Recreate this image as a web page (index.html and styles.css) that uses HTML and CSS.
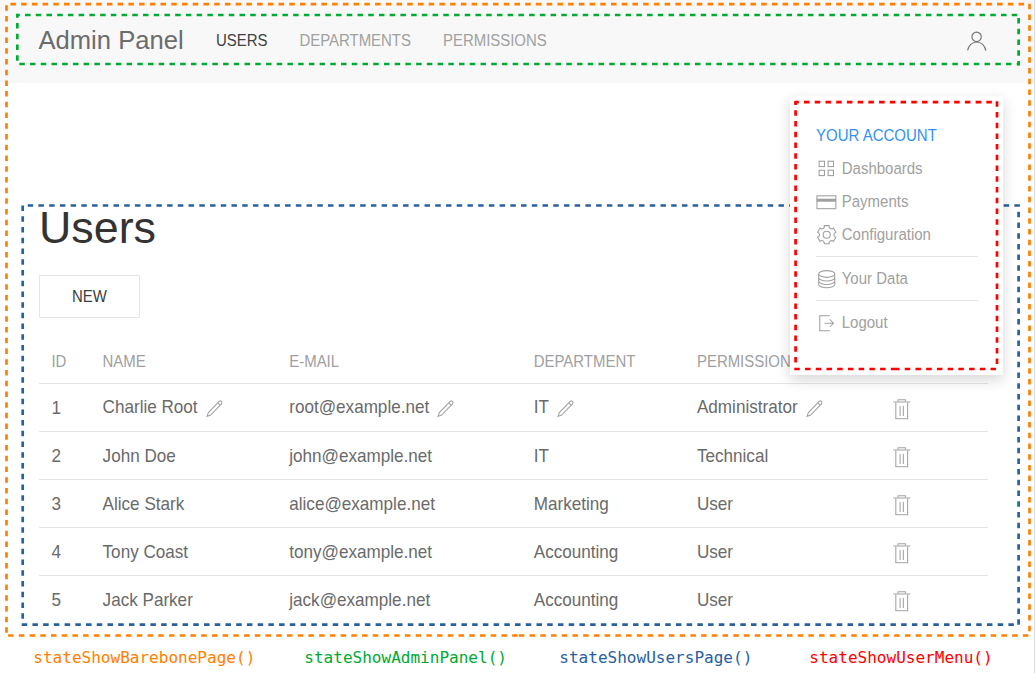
FILE: index.html
```html
<!DOCTYPE html>
<html lang="en">
<head>
<meta charset="utf-8">
<title>Admin Panel</title>
<link rel="stylesheet" href="styles.css">
</head>
<body>
<svg class="symbols" aria-hidden="true">
  <symbol id="user" viewBox="0 0 20 20"><g fill="none" stroke="currentColor" stroke-width="1.1"><circle cx="9.9" cy="6.4" r="4.4"/><path d="M1.5,19 C2.3,14.5 5.8,11.2 10,11.2 C14.2,11.2 17.7,14.6 18.5,19.2"/></g></symbol>
  <symbol id="grid" viewBox="0 0 20 20"><g fill="none" stroke="currentColor"><rect x="2.9" y="3" width="5" height="5"/><rect x="11.3" y="3" width="5" height="5"/><rect x="2.9" y="11.4" width="5" height="5"/><rect x="11.3" y="11.4" width="5" height="5"/></g></symbol>
  <symbol id="card" viewBox="0 0 20 20"><rect x=".9" y="4.5" width="17.6" height="12" fill="none" stroke="currentColor"/><rect x=".6" y="7.2" width="18.2" height="2.8" fill="currentColor"/></symbol>
  <symbol id="cog" viewBox="0 0 20 20"><g fill="none" stroke="currentColor"><circle cx="9.997" cy="10" r="3.31"/><path d="M18.488,12.285 L16.205,16.237 C15.322,15.496 14.185,15.281 13.303,15.791 C12.428,16.289 12.047,17.373 12.246,18.5 L7.735,18.5 C7.938,17.374 7.553,16.299 6.684,15.791 C5.801,15.27 4.655,15.492 3.773,16.237 L1.5,12.285 C2.573,11.871 3.317,10.999 3.317,9.991 C3.305,8.98 2.573,8.121 1.5,7.716 L3.765,3.784 C4.645,4.516 5.794,4.738 6.687,4.232 C7.555,3.722 7.939,2.637 7.735,1.5 L12.263,1.5 C12.072,2.637 12.441,3.71 13.314,4.22 C14.206,4.73 15.343,4.516 16.225,3.794 L18.487,7.714 C17.404,8.117 16.661,8.988 16.67,10.009 C16.672,11.018 17.415,11.88 18.488,12.285Z"/></g></symbol>
  <symbol id="database" viewBox="0 0 20 20"><g fill="none" stroke="currentColor"><ellipse cx="10" cy="4.64" rx="7.5" ry="3.14"/><path d="M17.5,8.11C17.5,9.85 14.14,11.25 10,11.25C5.86,11.25 2.5,9.84 2.5,8.11M17.5,11.25C17.5,12.99 14.14,14.39 10,14.39C5.86,14.39 2.5,12.98 2.5,11.25M17.49,4.64L17.5,14.36C17.5,16.1 14.14,17.5 10,17.5C5.86,17.5 2.5,16.09 2.5,14.36L2.5,4.64"/></g></symbol>
  <symbol id="signout" viewBox="0 0 20 20"><g fill="currentColor"><path d="M13.1 13.4 12.5 12.8 15.28 10 8 10 8 9 15.28 9 12.5 6.2 13.1 5.62 17 9.5Z"/><path d="M13 2 3 2 3 17 13 17 13 16 4 16 4 3 13 3Z"/></g></symbol>
  <symbol id="pencil" viewBox="0 0 20 20"><path fill="none" stroke="currentColor" d="M17.25,6.01L7.12,16.1L3.82,17.2L5.02,13.9L15.12,3.88C15.71,3.29 16.66,3.29 17.25,3.88C17.83,4.47 17.83,5.42 17.25,6.01ZM15.98,7.268L13.851,5.148"/></symbol>
  <symbol id="trash" viewBox="0 0 20 20"><path fill="none" stroke="currentColor" d="M6.5 3V1.5H13.5V3M4.5 4V18.5H15.5V4"/><path fill="currentColor" d="M8 7h1v9H8zM11 7h1v9h-1zM2 3h16v1H2z"/></symbol>
</svg>

<div class="page">
  <header class="navbar">
    <div class="logo">Admin Panel</div>
    <nav class="nav"><a class="active">USERS</a><a>DEPARTMENTS</a><a>PERMISSIONS</a></nav>
    <svg class="icon user"><use href="#user"/></svg>
  </header>

  <main class="content">
    <h1>Users</h1>
    <button class="new" type="button"><span class="label">NEW</span></button>
    <div class="table">
      <div class="row head"><span>ID</span><span>NAME</span><span>E-MAIL</span><span>DEPARTMENT</span><span>PERMISSION</span><span></span></div>
      <div class="row"><span>1</span><span>Charlie Root<svg class="icon edit"><use href="#pencil"/></svg></span><span>root@example.net<svg class="icon edit"><use href="#pencil"/></svg></span><span>IT<svg class="icon edit"><use href="#pencil"/></svg></span><span>Administrator<svg class="icon edit"><use href="#pencil"/></svg></span><span><svg class="icon trash"><use href="#trash"/></svg></span></div>
      <div class="row"><span>2</span><span>John Doe</span><span>john@example.net</span><span>IT</span><span>Technical</span><span><svg class="icon trash"><use href="#trash"/></svg></span></div>
      <div class="row"><span>3</span><span>Alice Stark</span><span>alice@example.net</span><span>Marketing</span><span>User</span><span><svg class="icon trash"><use href="#trash"/></svg></span></div>
      <div class="row"><span>4</span><span>Tony Coast</span><span>tony@example.net</span><span>Accounting</span><span>User</span><span><svg class="icon trash"><use href="#trash"/></svg></span></div>
      <div class="row"><span>5</span><span>Jack Parker</span><span>jack@example.net</span><span>Accounting</span><span>User</span><span><svg class="icon trash"><use href="#trash"/></svg></span></div>
    </div>
  </main>

  <footer class="legend"><span class="orange">stateShowBarebonePage()</span><span class="green">stateShowAdminPanel()</span><span class="blue">stateShowUsersPage()</span><span class="red">stateShowUserMenu()</span></footer>

  <svg class="outline" viewBox="0 0 1035 673">
    <g class="orange">
      <path d="M10.4 4.2H1025"/><path d="M6.5 5.3V634"/><path d="M1029.5 3.7V632"/><path d="M8.1 635.5H518.8"/><path d="M518.8 635.5H1029"/>
    </g>
    <g class="green">
      <path stroke-dashoffset="1.7" d="M16 15H1018"/><path stroke-dashoffset="3.4" d="M17.3 15.7V62"/><path d="M19.3 64H1020"/><path d="M1018.6 18V65.5"/>
    </g>
    <g class="blue">
      <path d="M27.7 205.5H1020"/><path d="M22.7 205.6V622"/><path d="M21.7 624.7H1016"/><path d="M1018.6 211.7V625"/>
    </g>
  </svg>

  <aside class="menu">
    <div class="title label">YOUR ACCOUNT</div>
    <a><svg class="icon"><use href="#grid"/></svg><span class="label">Dashboards</span></a>
    <a><svg class="icon"><use href="#card"/></svg><span class="label">Payments</span></a>
    <a><svg class="icon"><use href="#cog"/></svg><span class="label">Configuration</span></a>
    <hr>
    <a><svg class="icon"><use href="#database"/></svg><span class="label">Your Data</span></a>
    <hr>
    <a><svg class="icon"><use href="#signout"/></svg><span class="label">Logout</span></a>
  </aside>

  <svg class="outline" viewBox="0 0 1035 673">
    <g class="red">
      <path stroke-dashoffset="1.1" d="M794.4 102.2H995"/><path stroke-dashoffset="2" d="M795.6 101.6V367"/><path d="M997 101.2V366"/><path d="M794.3 369H894"/><path d="M894 369H998"/>
    </g>
  </svg>
</div>
</body>
</html>
```
FILE: styles.css
```css
* { box-sizing: border-box; }
body { margin: 0; background: #fff; font-family: "Liberation Sans", Arial, sans-serif; color: #6a6a6a; }
.symbols { display: none; }
.page { position: relative; width: 1035px; height: 673px; overflow: hidden; border-right: 1px solid #ddd; }
.icon { width: 21.45px; height: 21.45px; flex: none; display: block; }
.label, .nav a, .head > span { display: inline-block; transform: scaleY(1.07); }

.navbar { height: 83px; padding: 0 47px 0 38.5px; background: #f8f8f8; display: flex; align-items: flex-start; }
.logo { width: 177.5px; font-size: 25.6px; color: #6c6c6c; }
.nav { display: flex; gap: 32px; flex: 1; font-size: 14.95px; color: #a0a0a0; }
.nav .active { color: #404040; }
.logo, .nav a { line-height: 81px; }
.logo { line-height: 80px; }
.user { margin-top: 30px; color: #777; }

.content { height: 553px; padding: 116px 46px 0 39px; }
h1 { margin: 0; font-size: 44.8px; line-height: 57px; font-weight: 400; color: #333; }
.new { display: block; width: 101px; height: 43px; margin: 19px 0 0; padding: 0; background: transparent; border: 1px solid #e5e5e5; font: 14.95px "Liberation Sans", Arial, sans-serif; color: #3c3c3c; }
.table { margin-top: 20px; width: 949px; }
.row { height: 48px; display: grid; grid-template-columns: 51.2px 186.7px 244.5px 163.2px 194px 1fr; padding-left: 12.4px; align-items: center; font-size: 17.1px; border-bottom: 1px solid #e5e5e5; }
.row:last-child { border-bottom: 0; }
.row > span { display: flex; align-items: center; white-space: nowrap; transform: translateY(.5px) scaleY(1.04); }
.row.head { height: 46px; font-size: 14.95px; color: #a0a0a0; }
.row.head > span { transform: translateY(.3px) scaleY(1.07); }
.edit { margin: 1px 0 0 5px; color: #a2a2a2; }
.trash { margin: 2px 0 0 .4px; color: #a2a2a2; }

.legend { height: 37px; padding: 11px 0 0 33.3px; display: flex; font: 16.04px/22px "DejaVu Sans Mono", monospace; }
.legend span { color: var(--c); }
.legend .orange { width: 271px; }
.legend .green { width: 255px; }
.legend .blue { width: 250px; }

.orange { --c: #ff8000; }
.green { --c: #00aa33; }
.blue { --c: #2860a0; }
.red { --c: #ff0000; }

.outline { position: absolute; left: 0; top: 0; width: 1035px; height: 673px; pointer-events: none; }
.outline g { fill: none; stroke: var(--c); stroke-width: 2.7; stroke-dasharray: 5.5 5.225; }

.menu { position: absolute; left: 790px; top: 96px; width: 213px; height: 279px; padding: 23px 25.5px 0 26px; background: #fff; box-shadow: 0 5px 13px rgba(0,0,0,.16); font-size: 15px; color: #a0a0a0; }
.title { display: block; height: 33px; line-height: 34px; color: #3391f1; }
.menu a { height: 33px; display: flex; align-items: center; gap: 4.3px; line-height: 33px; }
.menu a .icon { margin-top: 1px; }
.menu hr { height: 1px; margin: 5px 0; border: 0; background: #e5e5e5; }
.menu a:nth-of-type(3) { height: 33.4px; }
```
